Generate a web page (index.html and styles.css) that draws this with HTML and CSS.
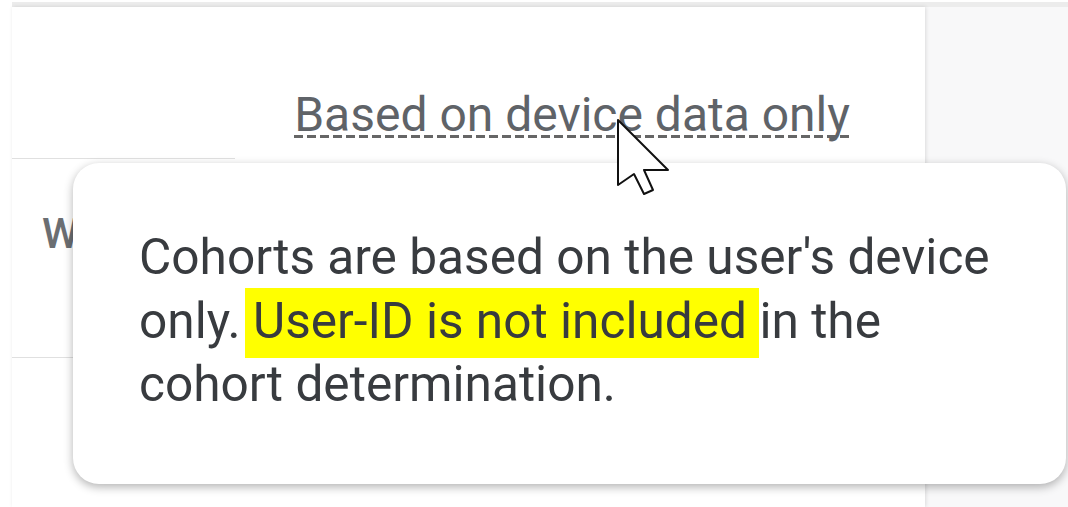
FILE: index.html
```html
<!DOCTYPE html>
<html lang="en">
<head>
    <meta charset="UTF-8">
    <meta name="viewport" content="width=device-width, initial-scale=1.0">
    <title>Cohort exploration</title>
    <link rel="stylesheet" href="styles.css">
</head>
<body>
    <div class="topbar"></div>

    <div class="layout">
        <div class="card">
            <div class="card-head">
                <span class="hint">Based on device data only</span>
            </div>
            <div class="rule short"></div>
            <div class="row">
                <span class="row-label">Week 0</span>
            </div>
            <div class="rule"></div>
        </div>
        <div class="side"></div>
    </div>

    <div class="tooltip">
        <p>Cohorts are based on the user's device only. <mark>User-ID is not included</mark> in the cohort determination.</p>
    </div>

    <svg class="cursor" width="56" height="80" viewBox="0 0 56 80">
        <path d="M2 2 L2 67 L18 56 L28 76 L37 72 L28 52 L52 52 Z" fill="#fff" stroke="#111" stroke-width="2" stroke-linejoin="round"/>
    </svg>
</body>
</html>
```

FILE: styles.css
```css
body {
    margin: 0;
    width: 1068px;
    height: 507px;
    overflow: hidden;
    position: relative;
    background-color: #ffffff;
    font-family: Roboto, "Noto Sans", Arial, sans-serif;
}

.topbar {
    height: 5px;
    margin: 2px 0 0 12px;
    background-color: #ececec;
}

.layout {
    display: flex;
    height: 500px;
}

.card {
    width: 913px;
    margin-left: 12px;
    background-color: #ffffff;
    box-shadow: 1px 0 4px rgba(0, 0, 0, 0.12);
    position: relative;
    z-index: 1;
}

.side {
    flex: 1;
    background-color: #f8f8f9;
}

.card-head {
    height: 151px;
    display: flex;
    justify-content: flex-end;
    align-items: flex-start;
    padding-right: 75px;
}

.hint {
    display: inline-block;
    margin-top: 88px;
    font-size: 48px;
    line-height: 40px;
    color: #5f6368;
    padding-bottom: 3px;
    background-image: repeating-linear-gradient(to right, #666666 0 9px, transparent 9px 13px);
    background-size: 100% 3px;
    background-position: 0 100%;
    background-repeat: no-repeat;
}

.rule {
    height: 1px;
    background-color: #e0e0e0;
}

.rule.short {
    width: 223px;
}

.row {
    height: 198px;
    padding-left: 30px;
    display: flex;
    align-items: center;
}

.row-label {
    font-size: 42px;
    font-weight: 500;
    color: #6b6e72;
    margin-top: -50px;
}

.tooltip {
    position: absolute;
    left: 73px;
    top: 163px;
    width: 993px;
    height: 321px;
    box-sizing: border-box;
    padding: 63px 40px 0 66px;
    background-color: #ffffff;
    border-radius: 26px;
    box-shadow: 0 3px 10px rgba(0, 0, 0, 0.3);
    z-index: 2;
}

.tooltip p {
    margin: 0;
    font-size: 49.6px;
    line-height: 63.5px;
    color: #383b3f;
}

.tooltip mark {
    background-color: #ffff00;
    color: #383b3f;
    padding: 4px 0 8px;
    box-shadow: -8px 0 0 #ffff00, 12px 0 0 #ffff00;
}

.cursor {
    position: absolute;
    left: 616px;
    top: 118px;
    z-index: 3;
}
```
